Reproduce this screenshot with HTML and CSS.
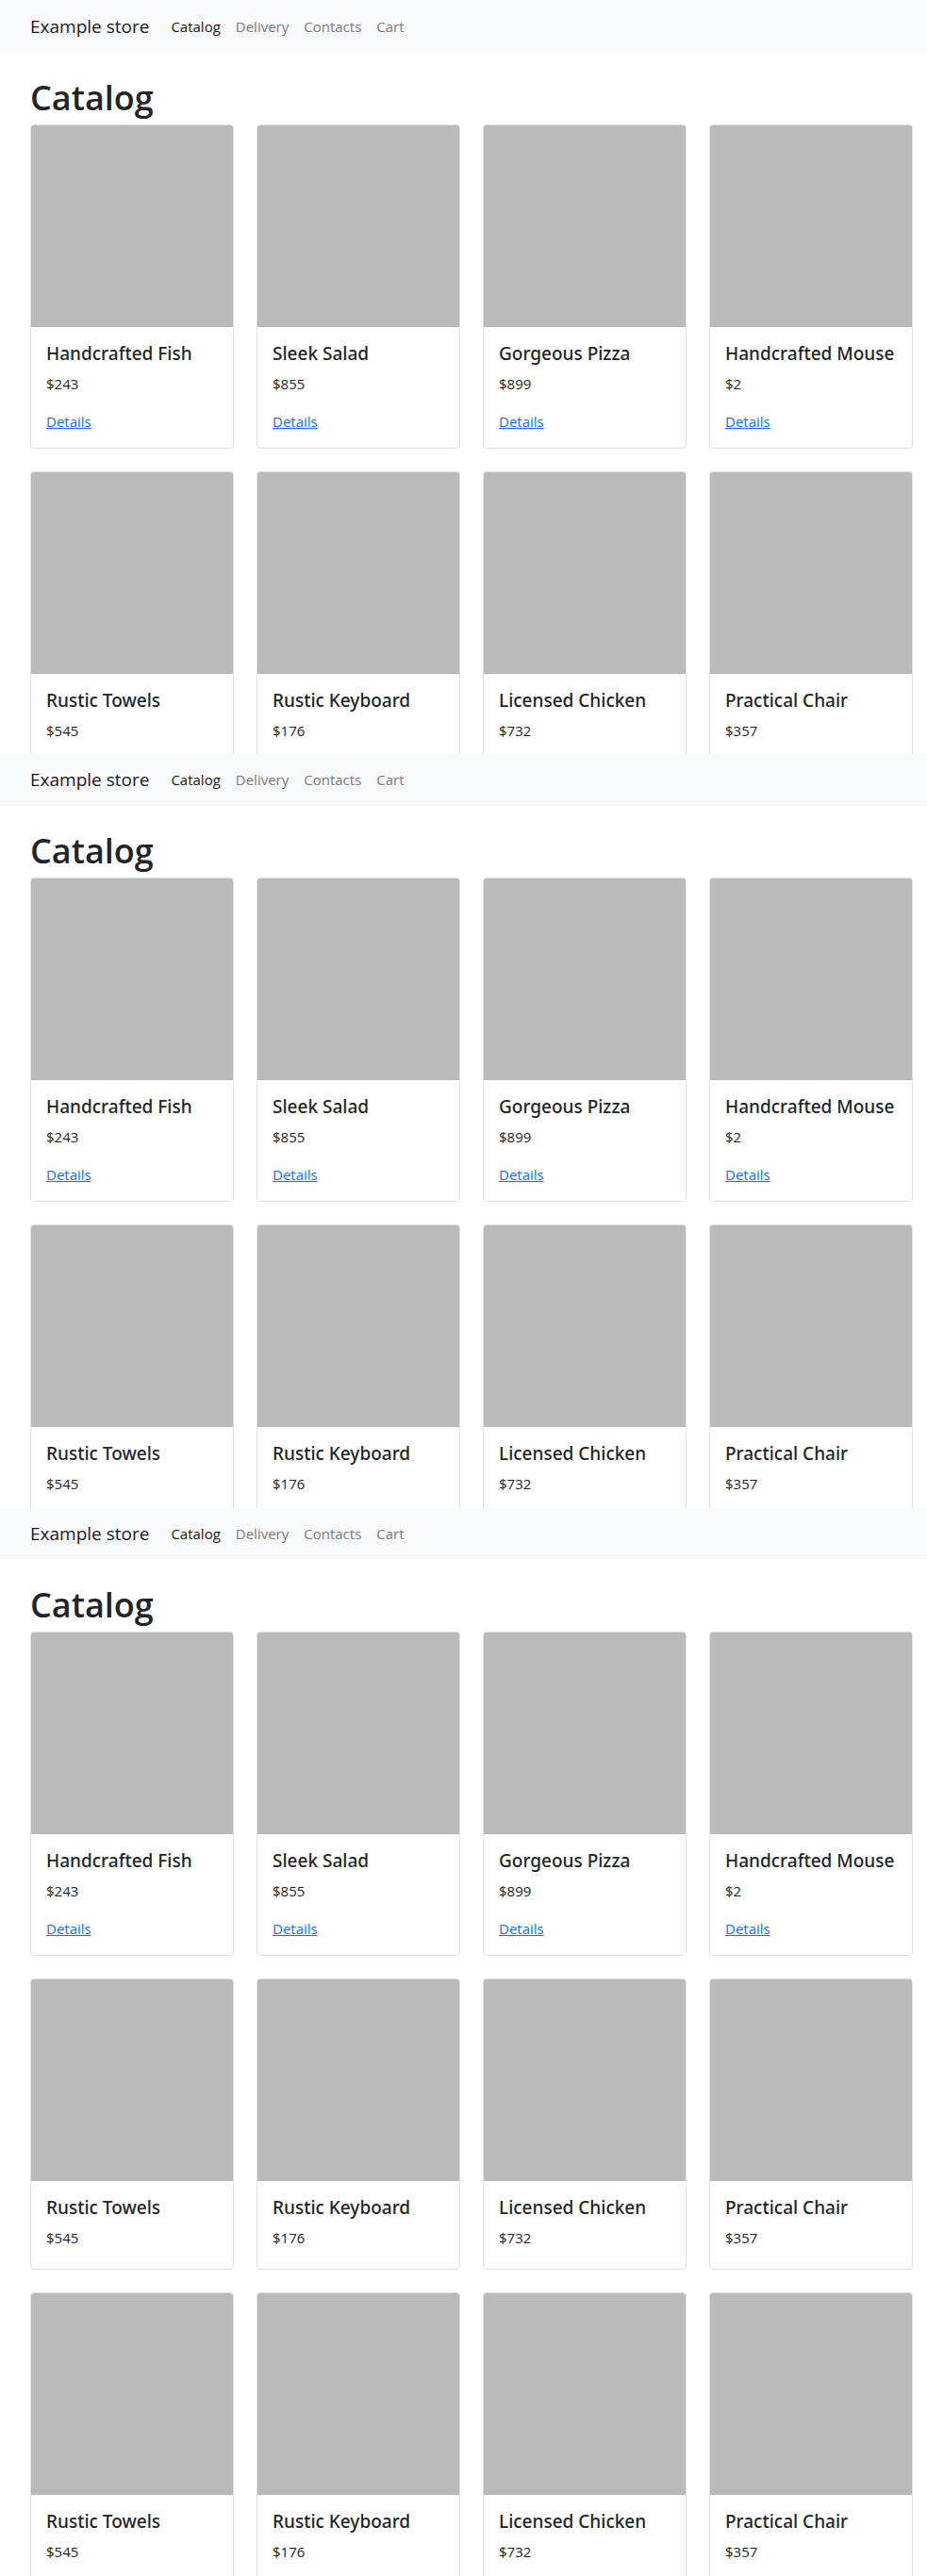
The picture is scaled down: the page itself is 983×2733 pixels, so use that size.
FILE: index.html
```html
<!DOCTYPE html>
<html lang="en">
<head>
<meta charset="utf-8">
<meta name="viewport" content="width=device-width, initial-scale=1">
<title>Example store</title>
<link rel="stylesheet" href="styles.css">
</head>
<body>
<section class="screen screen-first">
  <nav class="navbar">
    <a class="brand" href="#">Example store</a>
    <a class="nav-link active" href="#">Catalog</a>
    <a class="nav-link" href="#">Delivery</a>
    <a class="nav-link" href="#">Contacts</a>
    <a class="nav-link" href="#">Cart</a>
  </nav>
  <main class="container">
    <h1 class="heading">Catalog</h1>
    <div class="grid">
      <article class="card"><div class="card-image"></div><div class="card-body"><h2 class="card-title">Handcrafted Fish</h2><p class="price">$243</p><a class="details" href="#">Details</a></div></article>
      <article class="card"><div class="card-image"></div><div class="card-body"><h2 class="card-title">Sleek Salad</h2><p class="price">$855</p><a class="details" href="#">Details</a></div></article>
      <article class="card"><div class="card-image"></div><div class="card-body"><h2 class="card-title">Gorgeous Pizza</h2><p class="price">$899</p><a class="details" href="#">Details</a></div></article>
      <article class="card"><div class="card-image"></div><div class="card-body"><h2 class="card-title">Handcrafted Mouse</h2><p class="price">$2</p><a class="details" href="#">Details</a></div></article>
      <article class="card open"><div class="card-image"></div><div class="card-body"><h2 class="card-title">Rustic Towels</h2><p class="price">$545</p></div></article>
      <article class="card open"><div class="card-image"></div><div class="card-body"><h2 class="card-title">Rustic Keyboard</h2><p class="price">$176</p></div></article>
      <article class="card open"><div class="card-image"></div><div class="card-body"><h2 class="card-title">Licensed Chicken</h2><p class="price">$732</p></div></article>
      <article class="card open"><div class="card-image"></div><div class="card-body"><h2 class="card-title">Practical Chair</h2><p class="price">$357</p></div></article>
    </div>
  </main>
</section>
<section class="screen">
  <nav class="navbar">
    <a class="brand" href="#">Example store</a>
    <a class="nav-link active" href="#">Catalog</a>
    <a class="nav-link" href="#">Delivery</a>
    <a class="nav-link" href="#">Contacts</a>
    <a class="nav-link" href="#">Cart</a>
  </nav>
  <main class="container">
    <h1 class="heading">Catalog</h1>
    <div class="grid">
      <article class="card"><div class="card-image"></div><div class="card-body"><h2 class="card-title">Handcrafted Fish</h2><p class="price">$243</p><a class="details" href="#">Details</a></div></article>
      <article class="card"><div class="card-image"></div><div class="card-body"><h2 class="card-title">Sleek Salad</h2><p class="price">$855</p><a class="details" href="#">Details</a></div></article>
      <article class="card"><div class="card-image"></div><div class="card-body"><h2 class="card-title">Gorgeous Pizza</h2><p class="price">$899</p><a class="details" href="#">Details</a></div></article>
      <article class="card"><div class="card-image"></div><div class="card-body"><h2 class="card-title">Handcrafted Mouse</h2><p class="price">$2</p><a class="details" href="#">Details</a></div></article>
      <article class="card open"><div class="card-image"></div><div class="card-body"><h2 class="card-title">Rustic Towels</h2><p class="price">$545</p></div></article>
      <article class="card open"><div class="card-image"></div><div class="card-body"><h2 class="card-title">Rustic Keyboard</h2><p class="price">$176</p></div></article>
      <article class="card open"><div class="card-image"></div><div class="card-body"><h2 class="card-title">Licensed Chicken</h2><p class="price">$732</p></div></article>
      <article class="card open"><div class="card-image"></div><div class="card-body"><h2 class="card-title">Practical Chair</h2><p class="price">$357</p></div></article>
    </div>
  </main>
</section>
<section class="screen">
  <nav class="navbar">
    <a class="brand" href="#">Example store</a>
    <a class="nav-link active" href="#">Catalog</a>
    <a class="nav-link" href="#">Delivery</a>
    <a class="nav-link" href="#">Contacts</a>
    <a class="nav-link" href="#">Cart</a>
  </nav>
  <main class="container">
    <h1 class="heading">Catalog</h1>
    <div class="grid">
      <article class="card"><div class="card-image"></div><div class="card-body"><h2 class="card-title">Handcrafted Fish</h2><p class="price">$243</p><a class="details" href="#">Details</a></div></article>
      <article class="card"><div class="card-image"></div><div class="card-body"><h2 class="card-title">Sleek Salad</h2><p class="price">$855</p><a class="details" href="#">Details</a></div></article>
      <article class="card"><div class="card-image"></div><div class="card-body"><h2 class="card-title">Gorgeous Pizza</h2><p class="price">$899</p><a class="details" href="#">Details</a></div></article>
      <article class="card"><div class="card-image"></div><div class="card-body"><h2 class="card-title">Handcrafted Mouse</h2><p class="price">$2</p><a class="details" href="#">Details</a></div></article>
      <article class="card brief"><div class="card-image"></div><div class="card-body"><h2 class="card-title">Rustic Towels</h2><p class="price">$545</p></div></article>
      <article class="card brief"><div class="card-image"></div><div class="card-body"><h2 class="card-title">Rustic Keyboard</h2><p class="price">$176</p></div></article>
      <article class="card brief"><div class="card-image"></div><div class="card-body"><h2 class="card-title">Licensed Chicken</h2><p class="price">$732</p></div></article>
      <article class="card brief"><div class="card-image"></div><div class="card-body"><h2 class="card-title">Practical Chair</h2><p class="price">$357</p></div></article>
      <article class="card open"><div class="card-image"></div><div class="card-body"><h2 class="card-title">Rustic Towels</h2><p class="price">$545</p></div></article>
      <article class="card open"><div class="card-image"></div><div class="card-body"><h2 class="card-title">Rustic Keyboard</h2><p class="price">$176</p></div></article>
      <article class="card open"><div class="card-image"></div><div class="card-body"><h2 class="card-title">Licensed Chicken</h2><p class="price">$732</p></div></article>
      <article class="card open"><div class="card-image"></div><div class="card-body"><h2 class="card-title">Practical Chair</h2><p class="price">$357</p></div></article>
    </div>
  </main>
</section>
</body>
</html>
```
FILE: styles.css
```css
* {
  box-sizing: border-box;
}

body {
  margin: 0;
  background: #fff;
  color: #212529;
  font-family: "Segoe UI", "Open Sans", "Noto Sans", sans-serif;
  font-size: 15px;
  line-height: 24px;
}

.navbar {
  display: flex;
  align-items: center;
  gap: 16px;
  padding: 11px 32px 12px;
  background: #f8f9fa;
  line-height: 32px;
}

.screen-first .navbar {
  padding-top: 12px;
}

.brand {
  margin-right: 7px;
  color: #1a1b1b;
  font-size: 19px;
  text-decoration: none;
}

.nav-link {
  color: #7b7c7d;
  text-decoration: none;
}

.nav-link.active {
  color: #191919;
}

.container {
  padding: 24px 15px 0 32px;
}

.heading {
  margin: 0 0 4px;
  font-size: 36px;
  font-weight: 600;
  line-height: 48px;
}

.grid {
  display: grid;
  grid-template-columns: repeat(4, 1fr);
  gap: 24px;
}

.card {
  border: 1px solid #dfdfdf;
  border-radius: 4px;
  background: #fff;
  overflow: hidden;
}

.card-image {
  aspect-ratio: 1;
  background: #bababa;
}

.card-body {
  padding: 16px;
}

.card-title {
  margin: 0 0 8px;
  font-family: "Segoe UI", "Noto Sans", "Open Sans", sans-serif;
  font-size: 19px;
  font-weight: 500;
  line-height: 24px;
  white-space: nowrap;
}

.price {
  margin: 0 0 16px;
}

.details {
  display: inline-block;
  vertical-align: top;
  color: #0d6efd;
  text-decoration: underline;
}

.brief .card-body {
  padding-bottom: 5px;
}

/* Row that runs on past the end of its screen */
.open {
  border-bottom: 0;
  border-radius: 4px 4px 0 0;
}

.open .card-body {
  padding-bottom: 14px;
}

.screen-first .open .card-body {
  padding-bottom: 13px;
}

.open .price {
  margin-bottom: 0;
}
```
